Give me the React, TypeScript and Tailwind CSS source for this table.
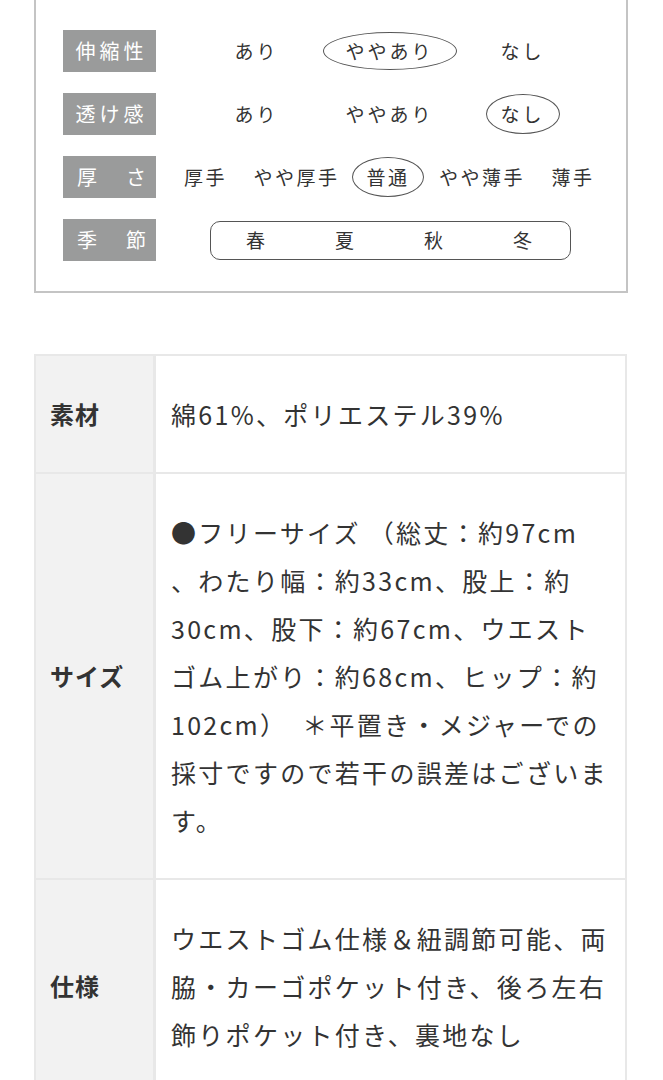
const jp = "font-['Noto_Sans_CJK_JP',sans-serif]"

function Label({ children }: { children: React.ReactNode }) {
  return (
    <div className="w-[93px] h-[42px] shrink-0 bg-[#9a9b9b] text-white text-[20px] flex items-center justify-center tracking-[4px] pl-[4px]">
      {children}
    </div>
  )
}

function Oval({ children, w, h }: { children: React.ReactNode; w: string; h: string }) {
  return (
    <span className={`${w} ${h} flex items-center justify-center border-[1.5px] border-[#555] rounded-[50%]`}>
      {children}
    </span>
  )
}

const sizeLines = [
  '●フリーサイズ （総丈：約97cm',
  '、わたり幅：約33cm、股上：約',
  '30cm、股下：約67cm、ウエスト',
  'ゴム上がり：約68cm、ヒップ：約',
  '102cm）　＊平置き・メジャーでの',
  '採寸ですので若干の誤差はございま',
  'す。',
]

const specLines = [
  'ウエストゴム仕様＆紐調節可能、両',
  '脇・カーゴポケット付き、後ろ左右',
  '飾りポケット付き、裏地なし',
]

function Row({ head, lines }: { head: string; lines: string[] }) {
  return (
    <div className="grid grid-cols-[117px_1fr] gap-[3px]">
      <div className="bg-[#f2f2f2] flex items-center pl-[14px] text-[24px] font-bold tracking-[1px] text-[#333]">
        {head}
      </div>
      <div className="bg-white pl-[15px] py-[34px] text-[25px] leading-[48px] tracking-[2.3px] text-[#333]">
        {lines.map((l, i) => (
          <div key={i} className="whitespace-nowrap">{l}</div>
        ))}
      </div>
    </div>
  )
}

export default function App() {
  return (
    <div className={`${jp} bg-white min-h-[1080px] pb-10`}>
      {/* feature chart */}
      <div className="ml-[34px] w-[594px] border-x-2 border-b-2 border-[#c4c4c4] pl-[27px] pt-[30px] pb-[30px] flex flex-col gap-[21px] text-[#333]">
        <div className="flex items-center">
          <Label>伸縮性</Label>
          <div className="ml-[34px] w-[399px] grid grid-cols-3 text-[19px] tracking-[3px] h-[42px] items-center justify-items-center">
            <span>あり</span>
            <Oval w="w-[134px]" h="h-[38px]">ややあり</Oval>
            <span>なし</span>
          </div>
        </div>
        <div className="flex items-center">
          <Label>透け感</Label>
          <div className="ml-[34px] w-[399px] grid grid-cols-3 text-[19px] tracking-[3px] h-[42px] items-center justify-items-center">
            <span>あり</span>
            <span>ややあり</span>
            <Oval w="w-[74px]" h="h-[40px]">なし</Oval>
          </div>
        </div>
        <div className="flex items-center">
          <Label>
            <span className="flex w-full justify-between px-[10px] tracking-normal">
              <span>厚</span>
              <span>さ</span>
            </span>
          </Label>
          <div className="ml-[14px] flex items-center h-[42px] text-[19px] tracking-[2.5px]">
            <span className="w-[71px] text-center">厚手</span>
            <span className="w-[111px] text-center">やや厚手</span>
            <Oval w="w-[72px]" h="h-[40px]">普通</Oval>
            <span className="w-[116px] text-center">やや薄手</span>
            <span className="w-[66px] text-center">薄手</span>
          </div>
        </div>
        <div className="flex items-center">
          <Label>
            <span className="flex w-full justify-between px-[10px] tracking-normal">
              <span>季</span>
              <span>節</span>
            </span>
          </Label>
          <div className="ml-[54px] w-[361px] h-[39px] border-[1.5px] border-[#555] rounded-[10px] grid grid-cols-4 items-center justify-items-center text-[19px] pr-[3px]">
            <span>春</span>
            <span>夏</span>
            <span>秋</span>
            <span>冬</span>
          </div>
        </div>
      </div>

      {/* spec table */}
      <div className="ml-[34px] mt-[61px] w-[593px] border-2 border-[#e8e8e8] bg-[#e8e8e8] flex flex-col gap-[2px]">
        <Row head="素材" lines={['綿61%、ポリエステル39%']} />
        <Row head="サイズ" lines={sizeLines} />
        <Row head="仕様" lines={specLines} />
      </div>
    </div>
  )
}
